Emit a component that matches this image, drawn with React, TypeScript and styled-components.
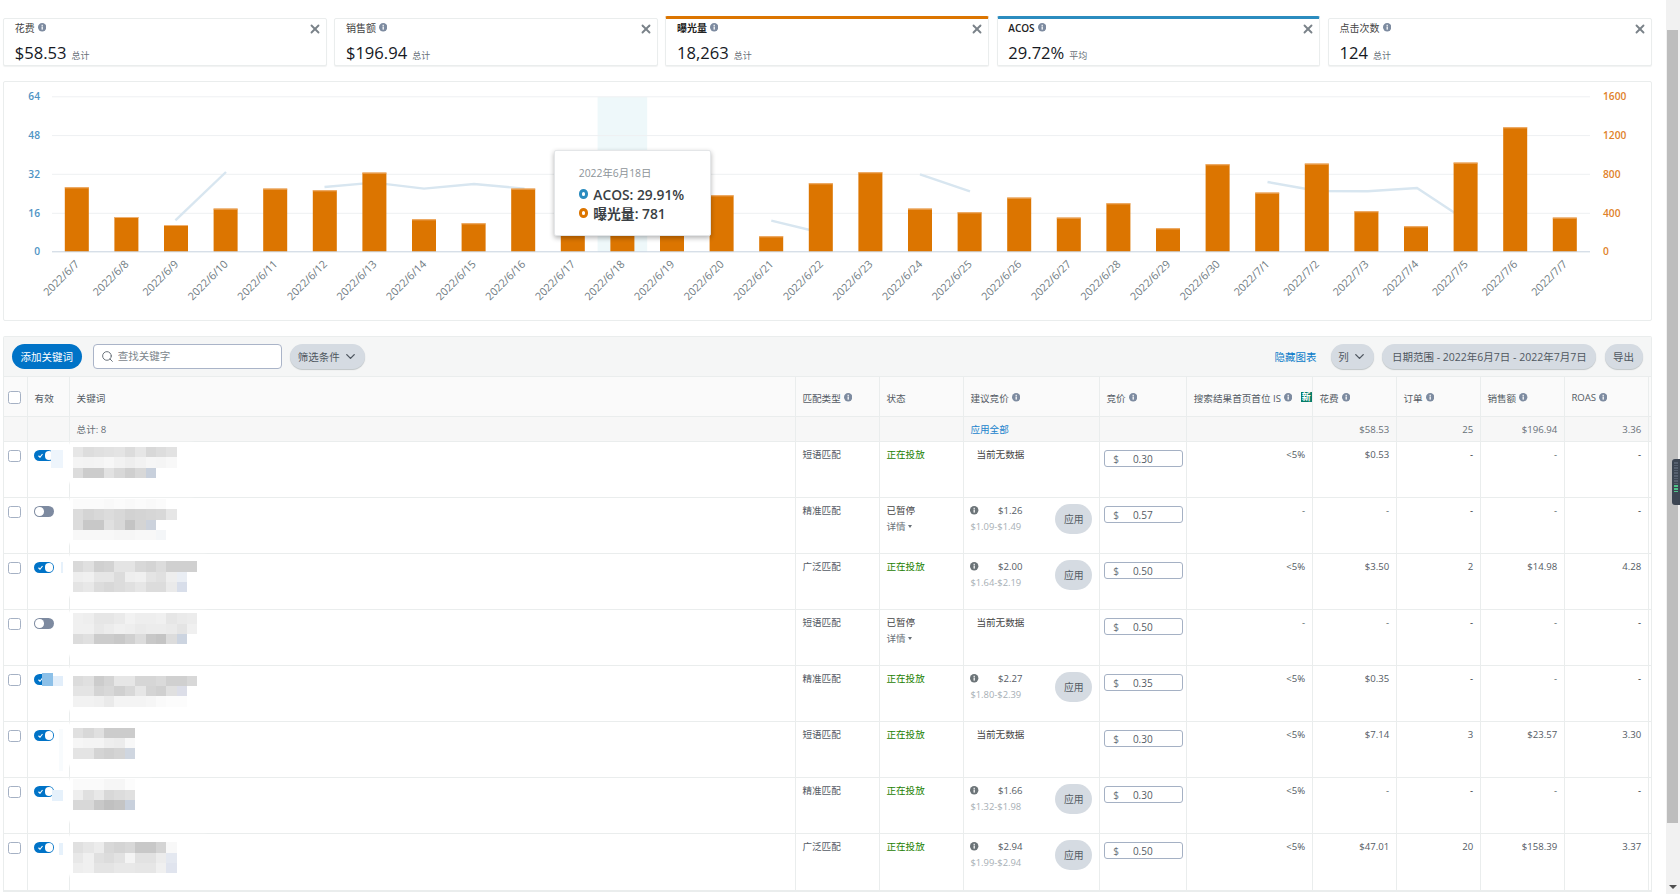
import React from "react";
import styled, { createGlobalStyle } from "styled-components";
import { ChevronDown, Search, X } from "lucide-react";

const GlobalStyle = createGlobalStyle`
  html, body {
    margin: 0;
    height: 100%;
    overflow: hidden;
    background: #fff;
    font-family: "Open Sans", "Noto Sans CJK SC", sans-serif;
    color: #444;
  }
  * {
    box-sizing: border-box;
  }
`;

const Page = styled.div`
  display: flex;
  height: 894px;
  position: relative;
`;

const Main = styled.main`
  flex: 1;
  min-width: 0;
  padding: 15.7px 0 0 3px;
`;

const ScrollTrack = styled.div`
  width: 14.3px;
  background: #f1f1f1;
  padding: 30px 2.3px 0 1.6px;
  display: flex;
  flex-direction: column;
  align-items: center;
`;

const ScrollThumb = styled.div`
  width: 100%;
  height: 793px;
  background: #bdbdbd;
`;

const ScrollArrow = styled.div`
  margin-top: 62px;
  border-left: 4px solid transparent;
  border-right: 4px solid transparent;
  border-top: 4px solid #505050;
`;

const Widget = styled.div`
  position: absolute;
  right: 0;
  top: 459px;
  width: 8px;
  height: 46px;
  background: #3d4653;
  border-radius: 3px 0 0 3px;
  padding: 3px 2px;
  display: flex;
  flex-direction: column;
  gap: 1px;
`;

const WidgetLed = styled.span<{ $lit?: boolean }>`
  height: 1.6px;
  background: ${(p) => (p.$lit ? "#4fc38a" : "#576170")};
`;

/* metric cards */
const CardRow = styled.section`
  display: flex;
  align-items: flex-end;
  gap: 7.5px;
  width: 1648.5px;
`;

const Card = styled.div<{ $accent?: string }>`
  flex: 1;
  height: ${(p) => (p.$accent ? "50.3px" : "48.3px")};
  border: 1px solid #eaeded;
  border-top: ${(p) => (p.$accent ? `3px solid ${p.$accent}` : "1px solid #eaeded")};
  border-radius: 2px;
  box-shadow: 0 1px 1px rgba(0, 28, 36, 0.06);
  padding: 2px 8px 0 10.7px;
  background: #fff;
`;

const CardHead = styled.div`
  display: flex;
  align-items: center;
  height: 14px;
  gap: 3px;
`;

const CardTitle = styled.span<{ $strong?: boolean }>`
  font-size: 10px;
  font-weight: ${(p) => (p.$strong ? 600 : 400)};
  color: ${(p) => (p.$strong ? "#222" : "#444")};
`;

const CloseButton = styled.span`
  margin: 3px -4px 0 auto;
  display: flex;
  color: #7a8289;
`;

const CardValueRow = styled.div`
  display: flex;
  align-items: baseline;
  gap: 5px;
  margin-top: 7.6px;
  line-height: 22px;
`;

const CardValue = styled.span`
  font-size: 16.6px;
  color: #16191f;
`;

const CardUnit = styled.span`
  font-size: 9px;
  color: #687078;
`;

/* chart */
const ChartPanel = styled.section`
  position: relative;
  width: 1648.5px;
  height: 240px;
  margin-top: 14.7px;
  border: 1px solid #eaeded;
  border-radius: 2px;
`;

const ChartSvg = styled.svg`
  display: block;
`;

const Tooltip = styled.div`
  position: absolute;
  left: 550px;
  top: 68.3px;
  width: 157px;
  height: 85.7px;
  padding: 15px 0 0 23.7px;
  background: #fff;
  border: 1px solid #e4e6e8;
  border-radius: 2px;
  box-shadow: 0 2px 5px rgba(0, 0, 0, 0.3);
`;

const TooltipDate = styled.div`
  font-size: 10.4px;
  line-height: 14px;
  color: #8d9499;
  margin-bottom: 5px;
`;

const TooltipRow = styled.div`
  display: flex;
  align-items: center;
  gap: 5px;
  height: 18.6px;
  font-size: 13.8px;
  font-weight: 600;
  color: #3a3f44;
`;

const TooltipDot = styled.span<{ $color: string }>`
  width: 9.6px;
  height: 9.6px;
  border-radius: 50%;
  border: 3.2px solid ${(p) => p.$color};
  background: #fff;
`;

/* table */
const TableBox = styled.section`
  width: 1648.5px;
  margin-top: 15.3px;
  border: 1px solid #eaeded;
  border-bottom: 2px solid #eaeded;
  border-radius: 2px 2px 0 0;
`;

const Toolbar = styled.div`
  display: flex;
  align-items: center;
  height: 40px;
  padding: 0 8px 0 7.7px;
  background: #f5f6f6;
  border-bottom: 1px solid #eaeded;
  font-size: 10.5px;
`;

const PrimaryButton = styled.button`
  height: 25px;
  width: 70px;
  padding: 0;
  border: 0;
  border-radius: 13px;
  background: #0073c7;
  color: #fff;
  font: inherit;
  margin-right: 11px;
`;

const SearchBox = styled.label`
  display: flex;
  align-items: center;
  gap: 4px;
  width: 189.6px;
  height: 25px;
  padding-left: 7px;
  background: #fff;
  border: 1px solid #aab4c8;
  border-radius: 4px;
  color: #687078;
  margin-right: 8px;
`;

const SearchInput = styled.input`
  flex: 1;
  min-width: 0;
  border: 0;
  outline: 0;
  padding: 0;
  background: transparent;
  font: inherit;
  &::placeholder {
    color: #7c868c;
    opacity: 1;
  }
`;

const Pill = styled.button<{ $pad: number }>`
  display: inline-flex;
  align-items: center;
  gap: 3px;
  height: 25px;
  padding: 0 ${(p) => p.$pad}px;
  border: 0;
  border-radius: 13px;
  background: #d5dbe2;
  box-shadow: 0 1px 1px rgba(0, 28, 36, 0.22);
  color: #4f5760;
  font: inherit;
  white-space: nowrap;
`;

const ToolbarRight = styled.div`
  margin-left: auto;
  display: flex;
  align-items: center;
  gap: 8.2px;
`;

const HideLink = styled.a`
  color: #0a7cc9;
  margin-right: 6.3px;
`;

const Row = styled.div<{ $kind: "head" | "total" | "body" }>`
  display: grid;
  grid-template-columns: 24px 42px 725.8px 84px 84px 136px 87.4px 125.6px 84px 84px 84px 84px;
  height: ${(p) => (p.$kind === "head" ? "40.5px" : p.$kind === "total" ? "24.2px" : "56px")};
  background: ${(p) => (p.$kind === "head" ? "#fafafa" : p.$kind === "total" ? "#f7f7f7" : "#fff")};
  border-bottom: 1px solid #eaeded;
  font-size: 9.6px;
  &:last-child {
    border-bottom: 0;
  }
`;

const Cell = styled.div<{ $right?: boolean; $dark?: boolean }>`
  border-right: 1px solid #eaeded;
  padding: 6px 6.6px 0;
  line-height: 14px;
  text-align: ${(p) => (p.$right ? "right" : "left")};
  color: ${(p) => (p.$dark ? "#16191f" : "#545b64")};
`;

const HeadCell = styled.div`
  position: relative;
  display: flex;
  align-items: center;
  gap: 3px;
  padding: 1.6px 6.6px 0;
  border-right: 1px solid #eaeded;
  color: #545b64;
  white-space: nowrap;
`;

const TotalCell = styled.div<{ $right?: boolean }>`
  display: flex;
  align-items: center;
  justify-content: ${(p) => (p.$right ? "flex-end" : "flex-start")};
  padding: 0 6.6px;
  border-right: 1px solid #eaeded;
  color: #687078;
`;

const ApplyAll = styled.a`
  color: #1a83cc;
`;

const CheckCell = styled.div<{ $center?: boolean }>`
  border-right: 1px solid #eaeded;
  padding-left: 4px;
  display: flex;
  align-items: ${(p) => (p.$center ? "center" : "flex-start")};
  padding-top: ${(p) => (p.$center ? "2px" : "8px")};
`;

const Check = styled.input.attrs({ type: "checkbox" })`
  appearance: none;
  width: 13px;
  height: 12.6px;
  margin: 0;
  background: #fff;
  border: 1px solid #a5b1c4;
  border-radius: 2.5px;
`;

const ToggleCell = styled.div`
  border-right: 1px solid #eaeded;
  padding: 8.6px 0 0 6.3px;
`;

const Toggle = styled.span<{ $on: boolean }>`
  display: flex;
  align-items: center;
  justify-content: ${(p) => (p.$on ? "flex-end" : "flex-start")};
  position: relative;
  width: 20px;
  height: 11px;
  padding: 0 1.2px;
  border-radius: 6px;
  background: ${(p) => (p.$on ? "#0073c7" : "#7d8aa0")};
`;

const ToggleKnob = styled.span`
  width: 8.6px;
  height: 8.6px;
  border-radius: 50%;
  background: #fff;
`;

const ToggleTick = styled.svg`
  position: absolute;
  left: 3.5px;
  top: 3px;
`;

const KeywordCell = styled.div<{ $top: number }>`
  position: relative;
  z-index: 1;
  padding: ${(p) => p.$top}px 0 0 3px;
  border-right: 1px solid #eaeded;
`;

const Smudge = styled.div<{ $width: number; $height: number }>`
  position: absolute;
  left: -7.5px;
  top: 1px;
  width: ${(p) => p.$width}px;
  height: ${(p) => p.$height}px;
  background: #fff;
  filter: blur(1.5px);
`;

const Tint = styled.div<{ $x: number; $y: number; $w: number; $h: number; $color: string }>`
  position: absolute;
  left: ${(p) => p.$x}px;
  top: ${(p) => p.$y}px;
  width: ${(p) => p.$w}px;
  height: ${(p) => p.$h}px;
  background: ${(p) => p.$color};
`;

const MosaicLine = styled.div`
  position: relative;
  display: flex;
  height: 10.4px;
`;

const MosaicCell = styled.span<{ $tone: string }>`
  width: 10.36px;
  background: #${(p) => p.$tone};
  filter: blur(0.3px);
`;

const Running = styled.span`
  color: #1d8102;
`;

const Paused = styled.span`
  color: #444;
`;

const Details = styled.div`
  margin-top: 2px;
  display: flex;
  align-items: center;
  gap: 2px;
  color: #687078;
`;

const Caret = styled.span`
  border-left: 2.5px solid transparent;
  border-right: 2.5px solid transparent;
  border-top: 3px solid #687078;
`;

const SuggestCell = styled.div`
  display: flex;
  align-items: flex-start;
  padding: 7.3px 6.6px 0;
  border-right: 1px solid #eaeded;
`;

const NoData = styled.span`
  margin-left: 6px;
  line-height: 11px;
  color: #444;
`;

const BidInfo = styled.div`
  width: 52.7px;
`;

const BidLine = styled.div`
  display: flex;
  align-items: center;
  justify-content: space-between;
  line-height: 11px;
  color: #545b64;
`;

const BidRange = styled.div`
  margin-top: 5px;
  line-height: 11px;
  white-space: nowrap;
  color: #a7afb5;
  font-size: 9.4px;
`;

const ApplyButton = styled.button`
  width: 37.4px;
  height: 30px;
  margin: -0.6px 0 0 32.6px;
  padding: 0;
  border: 0;
  border-radius: 15px;
  background: #d5dbe2;
  color: #545b64;
  font: inherit;
  font-size: 9.8px;
`;

const BidCell = styled.div`
  padding: 8.6px 0 0 4px;
  border-right: 1px solid #eaeded;
`;

const BidBox = styled.label`
  display: flex;
  align-items: center;
  width: 79.4px;
  height: 17px;
  padding-left: 8.4px;
  border: 1px solid #a5b1c4;
  border-radius: 3px;
  background: #fff;
  color: #687078;
  font-size: 10px;
`;

const BidField = styled.input`
  width: 40px;
  margin-left: 14px;
  border: 0;
  padding: 0;
  outline: 0;
  background: transparent;
  font: inherit;
  color: #545b64;
`;

const NewBadge = styled.span`
  position: absolute;
  right: 0;
  top: 14.7px;
  width: 11px;
  height: 10.4px;
  background: #067d68;
  color: #fff;
  font-size: 9px;
  font-weight: 700;
  line-height: 10.4px;
  text-align: center;
`;

const InfoIcon = ({ color = "#7d8ba0" }: { color?: string }) => (
  <svg width="8.4" height="8.4" viewBox="0 0 16 16" style={{ flexShrink: 0 }}>
    <circle cx="8" cy="8" r="8" fill={color} />
    <rect x="6.8" y="6.6" width="2.4" height="6" fill="#fff" />
    <rect x="6.8" y="3.4" width="2.4" height="2.2" fill="#fff" />
  </svg>
);

const cards = [
  { title: "花费", value: "$58.53", unit: "总计" },
  { title: "销售额", value: "$196.94", unit: "总计" },
  { title: "曝光量", value: "18,263", unit: "总计", accent: "#dc7500" },
  { title: "ACOS", value: "29.72%", unit: "平均", accent: "#2b8cbf" },
  { title: "点击次数", value: "124", unit: "总计" },
];

// bar tops in page pixels, read from the plot
const bars: [string, number][] = [
  ["2022/6/7", 187], ["2022/6/8", 216.7], ["2022/6/9", 224.7], ["2022/6/10", 208.3],
  ["2022/6/11", 188.3], ["2022/6/12", 190], ["2022/6/13", 172.3], ["2022/6/14", 219],
  ["2022/6/15", 223], ["2022/6/16", 188.3], ["2022/6/17", 184], ["2022/6/18", 176],
  ["2022/6/19", 200], ["2022/6/20", 195], ["2022/6/21", 236], ["2022/6/22", 183],
  ["2022/6/23", 172], ["2022/6/24", 208.3], ["2022/6/25", 212], ["2022/6/26", 197.3],
  ["2022/6/27", 217.3], ["2022/6/28", 203], ["2022/6/29", 228], ["2022/6/30", 164],
  ["2022/7/1", 192.3], ["2022/7/2", 163.3], ["2022/7/3", 211], ["2022/7/4", 226],
  ["2022/7/5", 162.3], ["2022/7/6", 127], ["2022/7/7", 217.3],
];

const acosSegments = [
  "175.4,220 226,171.7",
  "324.5,186.7 374,182.3 424,188.3 474,183.7 524.5,188.3",
  "771.3,220.3 822.4,232.7",
  "920,174 970,191",
  "1267.5,181.7 1318,190.7 1367.6,191 1417,187.7 1467,220.7",
];

const leftTicks = [["64", 96.5], ["48", 135.3], ["32", 174], ["16", 213], ["0", 251.5]] as const;
const rightTicks = [["1600", 96.5], ["1200", 135.3], ["800", 174], ["400", 213], ["0", 251.5]] as const;

const PLOT_LEFT = 52;
const STEP = 49.6;

const Chart = () => (
  <ChartSvg width="1646.5" height="238" viewBox="4 81.7 1646.5 238">
    <rect x={PLOT_LEFT + STEP * 11} y="96.5" width={STEP} height="155" fill="#eef8fa" />
    {leftTicks.slice(0, 4).map(([label, y]) => (
      <line key={label} x1={PLOT_LEFT} x2="1590" y1={y} y2={y} stroke="#eef0f2" />
    ))}
    {acosSegments.map((points) => (
      <polyline key={points} points={points} fill="none" stroke="#d8e6f0" strokeWidth="2.4" />
    ))}
    {bars.map(([label, top], i) => {
      const cx = PLOT_LEFT + STEP * (i + 0.5);
      return (
        <g key={label}>
          <rect x={cx - 12} y={top} width="24" height={251.5 - top} fill="#dc7500" />
          <rect x={cx - 12} y={top} width="24" height="1" fill="#efb070" />
          <text
            x={cx + 3}
            y={264.5}
            transform={`rotate(-45 ${cx + 3} 264.5)`}
            textAnchor="end"
            fontSize="10.8"
            fill="#6f7b82"
          >
            {label}
          </text>
        </g>
      );
    })}
    <line x1={PLOT_LEFT} x2="1590" y1="251.5" y2="251.5" stroke="#c6d2de" />
    {leftTicks.map(([label, y]) => (
      <text key={label} x="40" y={y + 3.6} textAnchor="end" fontSize="10.2" fontWeight="600" fill="#4f94c4">
        {label}
      </text>
    ))}
    {rightTicks.map(([label, y]) => (
      <text key={label} x="1603" y={y + 3.6} fontSize="10.2" fontWeight="600" fill="#e0822a">
        {label}
      </text>
    ))}
  </ChartSvg>
);

type Tinted = { x: number; y: number; w: number; h: number; color: string };

type Keyword = {
  on: boolean;
  match: string;
  suggest?: [string, string];
  bid: string;
  is: string;
  spend: string;
  orders: string;
  sales: string;
  roas: string;
  top: number;
  smudge: [number, number];
  tints?: Tinted[];
  mosaic: string[];
};

// each mosaic line is a run of two-digit greys; a six-digit entry is a bluish cell
const keywords: Keyword[] = [
  {
    on: true, match: "短语匹配", bid: "0.30", is: "<5%", spend: "$0.53", orders: "-", sales: "-", roas: "-",
    top: 5.3, smudge: [130, 40],
    tints: [{ x: -19.5, y: 8, w: 12, h: 18, color: "#eef5fc" }],
    mosaic: ["e6 dd e0 e2 e4 dc e6 d8 dd e2", "f4 f3 f4 f7 f2 ee f2 f6 f5 f8", "dc cc cc e2 d8 cf d8 c8d0dc"],
  },
  {
    on: false, match: "精准匹配", suggest: ["$1.26", "$1.09-$1.49"], bid: "0.57", is: "-", spend: "-", orders: "-", sales: "-", roas: "-",
    top: 1.2, smudge: [130, 45],
    mosaic: ["fbfbfb fbfbfb fbfbfb f9f9f9 fbfbfb f9f9f9 fbfbfb f9f9f9 fbfbfb", "dc d4 d8 dc d8 d2 d4 d6 d8 e6", "dc c8 c8 e0 d8 c4 d4 ccd2dc", "f8 f8 f8 f8 f6 f6 f8 f8 f4f6f8"],
  },
  {
    on: true, match: "广泛匹配", suggest: ["$2.00", "$1.64-$2.19"], bid: "0.50", is: "<5%", spend: "$3.50", orders: "2", sales: "$14.98", roas: "4.28",
    top: 7.6, smudge: [143, 42],
    tints: [{ x: -9.5, y: 8, w: 2, h: 11, color: "#e6f1fb" }],
    mosaic: ["d9 e0 d0 d3 e4 e4 d8 d4 dc d0 d0 d0", "ee f0 e6 e6 dc ee f0 e4 e0 ee eaeef4", "e4 e8 dc d8 dc e0 e6 dc dc ea d8deea"],
  },
  {
    on: false, match: "短语匹配", bid: "0.50", is: "-", spend: "-", orders: "-", sales: "-", roas: "-",
    top: 3.6, smudge: [143, 45],
    mosaic: ["f0 ee e6 e6 ea f2 ee ee f0 e6 ea ec", "f0 f0 e8 ec f0 ee ea ec ec ea e4 f0", "dc e0 cc cc c8 d0 dc c8 c4 dc ccd4e0"],
  },
  {
    on: true, match: "精准匹配", suggest: ["$2.27", "$1.80-$2.39"], bid: "0.35", is: "<5%", spend: "$0.35", orders: "-", sales: "-", roas: "-",
    top: 10, smudge: [168, 44],
    tints: [
      { x: -27.8, y: 7, w: 10.6, h: 13, color: "#8cc0e8" },
      { x: -17.2, y: 10, w: 10, h: 10, color: "#e2eefa" },
    ],
    mosaic: ["dc e0 cc d4 e6 e6 d6 d6 da d0 d0 d8", "e4 e4 d4 d8 d0 d8 e6 d4 d0 e0 dcdee8", "f2 f2 f0 ea f4 f4 f4 f6 fa fc fc"],
  },
  {
    on: true, match: "短语匹配", bid: "0.30", is: "<5%", spend: "$7.14", orders: "3", sales: "$23.57", roas: "3.30",
    top: 6, smudge: [88, 43],
    tints: [{ x: -11.5, y: 7, w: 4, h: 42, color: "#f8fbfd" }],
    mosaic: ["e0 d8 e0 cc cc cc", "f6 f4 f4 ee ec f8", "e4 e4 d4 d0 d4 cfd6e0"],
  },
  {
    on: true, match: "精准匹配", suggest: ["$1.66", "$1.32-$1.98"], bid: "0.30", is: "<5%", spend: "-", orders: "-", sales: "-", roas: "-",
    top: 1.6, smudge: [88, 43],
    tints: [{ x: -18.5, y: 12, w: 11, h: 11, color: "#e6f1fb" }],
    mosaic: ["fa fa fa f6 f6 fc", "ee e0 e8 d8 dc e0", "d8 d8 c8 c0 c4 c8d0dc"],
  },
  {
    on: true, match: "广泛匹配", suggest: ["$2.94", "$1.99-$2.94"], bid: "0.50", is: "<5%", spend: "$47.01", orders: "20", sales: "$158.39", roas: "3.37",
    top: 8.6, smudge: [143, 41],
    tints: [{ x: -11.5, y: 9, w: 4, h: 12, color: "#e6f1fb" }],
    mosaic: ["e0 e6 ec d8 d4 d8 c8 c8 d4 f8", "e8 f0 e0 dc e2 f4 e2 e2 ec e4e8f0", "ee f0 e4 e4 e8 e8 e6 e6 f0 e0e4ee"],
  },
];

const tone = (t: string) => (t.length === 2 ? t + t + t : t);

const Mosaic = ({ lines }: { lines: string[] }) => (
  <>
    {lines.map((line, i) => (
      <MosaicLine key={i}>
        {line.split(" ").map((t, j) => (
          <MosaicCell key={j} $tone={tone(t)} />
        ))}
      </MosaicLine>
    ))}
  </>
);

const headers = ["匹配类型", "状态", "建议竞价", "竞价"];

const App = () => (
  <Page>
    <GlobalStyle />
    <Main>
      <CardRow>
        {cards.map((c) => (
          <Card key={c.title} $accent={c.accent}>
            <CardHead>
              <CardTitle $strong={!!c.accent}>{c.title}</CardTitle>
              <InfoIcon />
              <CloseButton>
                <X size={14} strokeWidth={3.2} />
              </CloseButton>
            </CardHead>
            <CardValueRow>
              <CardValue>{c.value}</CardValue>
              <CardUnit>{c.unit}</CardUnit>
            </CardValueRow>
          </Card>
        ))}
      </CardRow>

      <ChartPanel>
        <Chart />
        <Tooltip>
          <TooltipDate>2022年6月18日</TooltipDate>
          <TooltipRow>
            <TooltipDot $color="#2b8cbf" />
            ACOS: 29.91%
          </TooltipRow>
          <TooltipRow>
            <TooltipDot $color="#dc7500" />
            曝光量: 781
          </TooltipRow>
        </Tooltip>
      </ChartPanel>

      <TableBox>
        <Toolbar>
          <PrimaryButton>添加关键词</PrimaryButton>
          <SearchBox>
            <Search size={13} strokeWidth={1.8} />
            <SearchInput placeholder="查找关键字" />
          </SearchBox>
          <Pill $pad={7.4}>
            筛选条件
            <ChevronDown size={15} strokeWidth={2.2} />
          </Pill>
          <ToolbarRight>
            <HideLink>隐藏图表</HideLink>
            <Pill $pad={7.4}>
              列
              <ChevronDown size={15} strokeWidth={2.2} />
            </Pill>
            <Pill $pad={9.6}>日期范围 - 2022年6月7日 - 2022年7月7日</Pill>
            <Pill $pad={8.5}>导出</Pill>
          </ToolbarRight>
        </Toolbar>

        <Row $kind="head">
          <CheckCell $center>
            <Check />
          </CheckCell>
          <HeadCell>有效</HeadCell>
          <HeadCell>关键词</HeadCell>
          {headers.map((h) => (
            <HeadCell key={h}>
              {h}
              {h !== "状态" && <InfoIcon />}
            </HeadCell>
          ))}
          <HeadCell>
            搜索结果首页首位 IS
            <InfoIcon />
            <NewBadge>新</NewBadge>
          </HeadCell>
          <HeadCell>
            花费
            <InfoIcon />
          </HeadCell>
          <HeadCell>
            订单
            <InfoIcon />
          </HeadCell>
          <HeadCell>
            销售额
            <InfoIcon />
          </HeadCell>
          <HeadCell>
            ROAS
            <InfoIcon />
          </HeadCell>
        </Row>

        <Row $kind="total">
          <TotalCell />
          <TotalCell />
          <TotalCell>总计: 8</TotalCell>
          <TotalCell />
          <TotalCell />
          <TotalCell>
            <ApplyAll>应用全部</ApplyAll>
          </TotalCell>
          <TotalCell />
          <TotalCell />
          <TotalCell $right>$58.53</TotalCell>
          <TotalCell $right>25</TotalCell>
          <TotalCell $right>$196.94</TotalCell>
          <TotalCell $right>3.36</TotalCell>
        </Row>

        {keywords.map((k, i) => (
          <Row $kind="body" key={i}>
            <CheckCell>
              <Check />
            </CheckCell>
            <ToggleCell>
              <Toggle $on={k.on}>
                {k.on && (
                  <ToggleTick width="5" height="5" viewBox="0 0 10 10">
                    <path d="M1 5.5 L4 8.5 L9 2" fill="none" stroke="#fff" strokeWidth="2.2" />
                  </ToggleTick>
                )}
                <ToggleKnob />
              </Toggle>
            </ToggleCell>
            <KeywordCell $top={k.top}>
              <Smudge $width={k.smudge[0]} $height={k.smudge[1]} />
              {k.tints?.map((t, j) => (
                <Tint key={j} $x={t.x} $y={t.y} $w={t.w} $h={t.h} $color={t.color} />
              ))}
              <Mosaic lines={k.mosaic} />
            </KeywordCell>
            <Cell>{k.match}</Cell>
            <Cell>
              {k.on ? (
                <Running>正在投放</Running>
              ) : (
                <>
                  <Paused>已暂停</Paused>
                  <Details>
                    详情
                    <Caret />
                  </Details>
                </>
              )}
            </Cell>
            <SuggestCell>
              {k.suggest ? (
                <>
                  <BidInfo>
                    <BidLine>
                      <InfoIcon color="#6c7478" />
                      {k.suggest[0]}
                    </BidLine>
                    <BidRange>{k.suggest[1]}</BidRange>
                  </BidInfo>
                  <ApplyButton>应用</ApplyButton>
                </>
              ) : (
                <NoData>当前无数据</NoData>
              )}
            </SuggestCell>
            <BidCell>
              <BidBox>
                $
                <BidField defaultValue={k.bid} />
              </BidBox>
            </BidCell>
            <Cell $right>{k.is}</Cell>
            <Cell $right>{k.spend}</Cell>
            <Cell $right $dark={k.orders === "-"}>{k.orders}</Cell>
            <Cell $right>{k.sales}</Cell>
            <Cell $right $dark={k.roas === "-"}>{k.roas}</Cell>
          </Row>
        ))}
      </TableBox>
    </Main>
    <ScrollTrack>
      <ScrollThumb />
      <ScrollArrow />
    </ScrollTrack>
    <Widget>
      {Array.from({ length: 12 }, (_, i) => (
        <WidgetLed key={i} $lit={i > 8} />
      ))}
    </Widget>
  </Page>
);

export default App;
